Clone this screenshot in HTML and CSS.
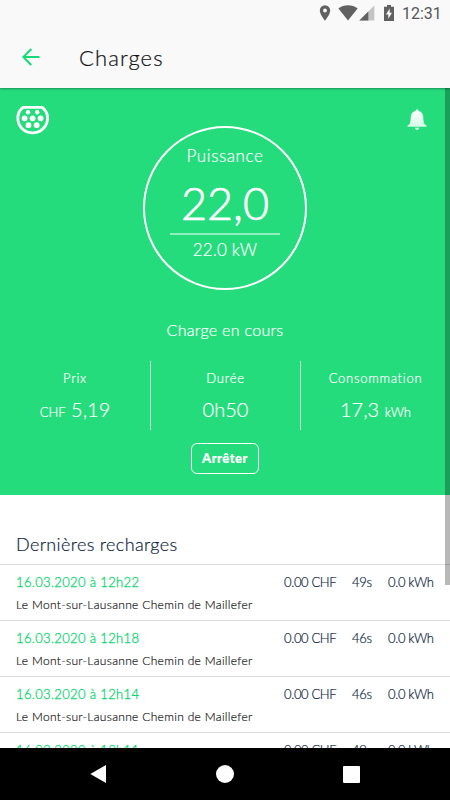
FILE: index.html
```html
<!DOCTYPE html>
<html lang="fr">
<head>
  <meta charset="UTF-8">
  <meta name="viewport" content="width=device-width, initial-scale=1">
  <title>Charges</title>
  <link rel="stylesheet" href="styles.css">
</head>
<body>
  <div class="screen">
    <header class="header">
      <div class="status-bar">
        <svg class="icon-pin" width="12" height="16" viewBox="0 0 12 16"><path fill-rule="evenodd" d="M6 .3a5.200 5.200 0 0 0-5.200 5.200C.8 9.400 6 15.700 6 15.700s5.200-6.300 5.200-10.200A5.200 5.200 0 0 0 6 .3zm0 3.300a1.900 1.900 0 1 1 0 3.800 1.900 1.900 0 0 1 0-3.800z"/></svg>
        <svg class="icon-wifi" width="20" height="16" viewBox="0 0 20 16"><path d="M.4 3.600C3.200 1.400 6.500.3 10 .3s6.800 1.100 9.600 3.300L10 15.600z"/></svg>
        <svg class="icon-signal" width="16" height="16" viewBox="0 0 16 16"><path opacity=".35" d="M15.300.5v15H.3z"/><path d="M9.300 6.500v9H.3z"/></svg>
        <svg class="icon-battery" width="10" height="16" viewBox="0 0 10 16"><path fill-rule="evenodd" d="M3 0h4v1.700h3V16H0V1.700h3zm2.700 3.500L2 9.500h2.300v4.200L8 7.700H5.700z"/></svg>
        <span class="clock">12:31</span>
      </div>
      <div class="title-bar">
        <svg class="back" width="18" height="18" viewBox="0 0 18 18"><path d="M17.500 9H1.500M9.300 1 1.400 9l7.900 8"/></svg>
        <h1>Charges</h1>
      </div>
    </header>

    <main class="content">
      <!-- Charge en cours -->
      <section class="charge">
        <svg class="plug" width="34" height="32" viewBox="0 0 34 32">
          <path d="M7 3.300h19.200c3.400 2.800 5.400 6.400 5.400 10.700 0 8.200-6.500 14.800-15 14.800S1.800 22.200 1.800 14c0-4.300 1.800-7.900 5.200-10.700z"/>
          <g><circle cx="12" cy="8.200" r="2.200"/><circle cx="21.200" cy="8.200" r="2.200"/><circle cx="8.600" cy="14.300" r="2.900"/><circle cx="16.600" cy="14.300" r="2.900"/><circle cx="24.600" cy="14.300" r="2.900"/><circle cx="12.500" cy="21.200" r="2.900"/><circle cx="20.700" cy="21.200" r="2.900"/></g>
        </svg>
        <svg class="bell" width="20" height="22" viewBox="0 0 20 22">
          <defs><linearGradient id="bellFill" x1="0" y1="0" x2="0" y2="1"><stop offset="0" stop-color="#fff"/><stop offset="1" stop-color="#cdf8e0"/></linearGradient></defs>
          <path fill="url(#bellFill)" d="M10 .5c1 0 1.500.7 1.600 1.500 2.900.7 4.400 2.900 4.600 5.700.3 5.400.6 7.600 3.300 8.900v1.200H.5v-1.200c2.700-1.300 3-3.500 3.300-8.900.2-2.800 1.700-5 4.600-5.700.1-.8.600-1.500 1.600-1.500zM7.800 18.700h4.400c-.3 1.500-1.100 2.200-2.200 2.200s-1.900-.7-2.200-2.200z"/>
        </svg>
        <div class="gauge">
          <div class="gauge-label">Puissance</div>
          <div class="gauge-value">22,0</div>
          <div class="gauge-max">22.0 kW</div>
        </div>
        <p class="state">Charge en cours</p>
        <div class="stats">
          <div class="stat">
            <div class="stat-label">Prix</div>
            <div class="stat-value"><small>CHF</small> 5,19</div>
          </div>
          <div class="stat">
            <div class="stat-label">Durée</div>
            <div class="stat-value">0h50</div>
          </div>
          <div class="stat">
            <div class="stat-label">Consommation</div>
            <div class="stat-value">17,3 <small>kWh</small></div>
          </div>
        </div>
        <button class="btn-stop">Arrêter</button>
      </section>

      <!-- Historique -->
      <section class="history">
        <h2>Dernières recharges</h2>
        <div class="item">
          <div class="item-row"><span class="date">16.03.2020 à 12h22</span><span class="price">0.00 CHF</span><span class="time">49s</span><span class="energy">0.0 kWh</span></div>
          <div class="place">Le Mont-sur-Lausanne Chemin de Maillefer</div>
        </div>
        <div class="item">
          <div class="item-row"><span class="date">16.03.2020 à 12h18</span><span class="price">0.00 CHF</span><span class="time">46s</span><span class="energy">0.0 kWh</span></div>
          <div class="place">Le Mont-sur-Lausanne Chemin de Maillefer</div>
        </div>
        <div class="item">
          <div class="item-row"><span class="date">16.03.2020 à 12h14</span><span class="price">0.00 CHF</span><span class="time">46s</span><span class="energy">0.0 kWh</span></div>
          <div class="place">Le Mont-sur-Lausanne Chemin de Maillefer</div>
        </div>
        <div class="item">
          <div class="item-row"><span class="date">16.03.2020 à 12h11</span><span class="price">0.00 CHF</span><span class="time">49s</span><span class="energy">0.0 kWh</span></div>
        </div>
      </section>
      <div class="scrollbar"></div>
    </main>

    <nav class="nav-bar">
      <svg width="16" height="18" viewBox="0 0 16 18"><path d="M16 0v18L.3 9z"/></svg>
      <svg width="18" height="18" viewBox="0 0 18 18"><circle cx="9" cy="9" r="9"/></svg>
      <svg width="17" height="17" viewBox="0 0 17 17"><rect width="17" height="17" rx="1"/></svg>
    </nav>
  </div>
</body>
</html>
```

FILE: styles.css
```css
:root {
  --green: #25dc7d;
  --green-text: #0bd66f;
  --navy: #0b1f3f;
  --bar-bg: #f9f9f9;
}

* { box-sizing: border-box; }
body { margin: 0; font-family: Lato, sans-serif; font-weight: 300; background: #fff; -webkit-text-stroke: 0.2px; }
h1, h2, p { margin: 0; font-weight: 300; }
svg { display: block; flex: none; }

.screen { width: 450px; height: 800px; display: flex; flex-direction: column; overflow: hidden; }

/* Barre du haut */
.header { position: relative; z-index: 1; height: 88px; flex: none; background: var(--bar-bg); box-shadow: 0 1px 2px rgba(0,0,0,0.35); }
.status-bar { height: 28px; padding: 0 10px 0 0; display: flex; justify-content: flex-end; align-items: center; fill: #616161; }
.status-bar svg { margin-top: -2px; }
.icon-wifi { margin-left: 7px; }
.icon-signal { margin-left: 1px; }
.icon-battery { margin-left: 9px; }
.clock { width: 38px; margin-left: 8px; font: 400 16px/28px Roboto, sans-serif; color: #555; white-space: nowrap; -webkit-text-stroke: 0; }
.title-bar { height: 60px; padding-left: 22px; display: flex; align-items: center; }
.back { fill: none; stroke: #17d975; stroke-width: 2; margin-top: -2px; }
h1 { margin-left: 39px; font-size: 22px; line-height: 28px; letter-spacing: 1.1px; color: #111; }

.content { position: relative; flex: 1; min-height: 0; overflow: hidden; }

/* Charge en cours */
.charge { position: relative; height: 407px; padding-top: 38px; display: flex; flex-direction: column; align-items: center; background: var(--green); color: #fff; }
.plug { position: absolute; left: 16px; top: 16px; fill: #fff; }
.plug > path { fill: none; stroke: #fff; stroke-width: 2.800; }
.bell { position: absolute; left: 407px; top: 21px; }
.gauge { width: 164px; height: 164px; flex: none; padding-top: 17px; border: 2px solid #fff; border-radius: 50%; display: flex; flex-direction: column; align-items: center; white-space: nowrap; }
.gauge-label { font-size: 17px; line-height: 22px; letter-spacing: 0.6px; }
.gauge-value { width: 110px; height: 68px; border-bottom: 2px solid #91eebf; font-size: 45px; line-height: 72px; text-align: center; -webkit-text-stroke: 0.7px; }
.gauge-max { font-size: 17px; line-height: 30px; letter-spacing: 0.2px; }
.state { margin-top: 29px; font-size: 16px; line-height: 22px; letter-spacing: 0.3px; }
.stats { width: 100%; height: 69px; margin-top: 20px; display: grid; grid-template-columns: repeat(3, 1fr); }
.stat { text-align: center; padding-top: 7px; }
.stat + .stat { border-left: 1px solid #c8f6de; }
.stat-label { font-size: 13px; line-height: 20px; letter-spacing: 0.75px; }
.stat-value { margin-top: 8px; font-size: 20px; line-height: 26px; }
.stat-value small { font-size: 13px; }
.btn-stop { width: 68px; height: 31px; margin-top: 13px; padding: 0; border: 1px solid #fff; border-radius: 6px; background: none; color: #fff; font: 900 13px/29px Lato, sans-serif; letter-spacing: 0.5px; }

/* Historique */
.history { background: #fff; color: var(--navy); }
h2 { height: 69px; padding: 37px 16px 0; font-size: 18px; line-height: 24px; letter-spacing: 0.35px; }
.item { height: 56px; padding: 8px 16px 0; border-top: 1px solid #dcdcdc; }
.item-row { display: flex; font-size: 13px; line-height: 19px; letter-spacing: -0.35px; white-space: nowrap; }
.date { flex: 1; letter-spacing: 0.35px; color: var(--green-text); -webkit-text-stroke: 0.3px; }
.price { width: 68px; }
.time { width: 36px; }
.energy { width: 46px; }
.place { margin-top: 4px; font-size: 12px; line-height: 18px; letter-spacing: 0.32px; color: #222; }

.scrollbar { position: absolute; right: 0; top: 0; width: 5px; height: 497px; background: rgba(0,0,0,0.28); }

/* Navigation Android */
.nav-bar { height: 52px; flex: none; padding: 0 90px; display: flex; justify-content: space-between; align-items: center; background: #000; fill: #fff; }
```
